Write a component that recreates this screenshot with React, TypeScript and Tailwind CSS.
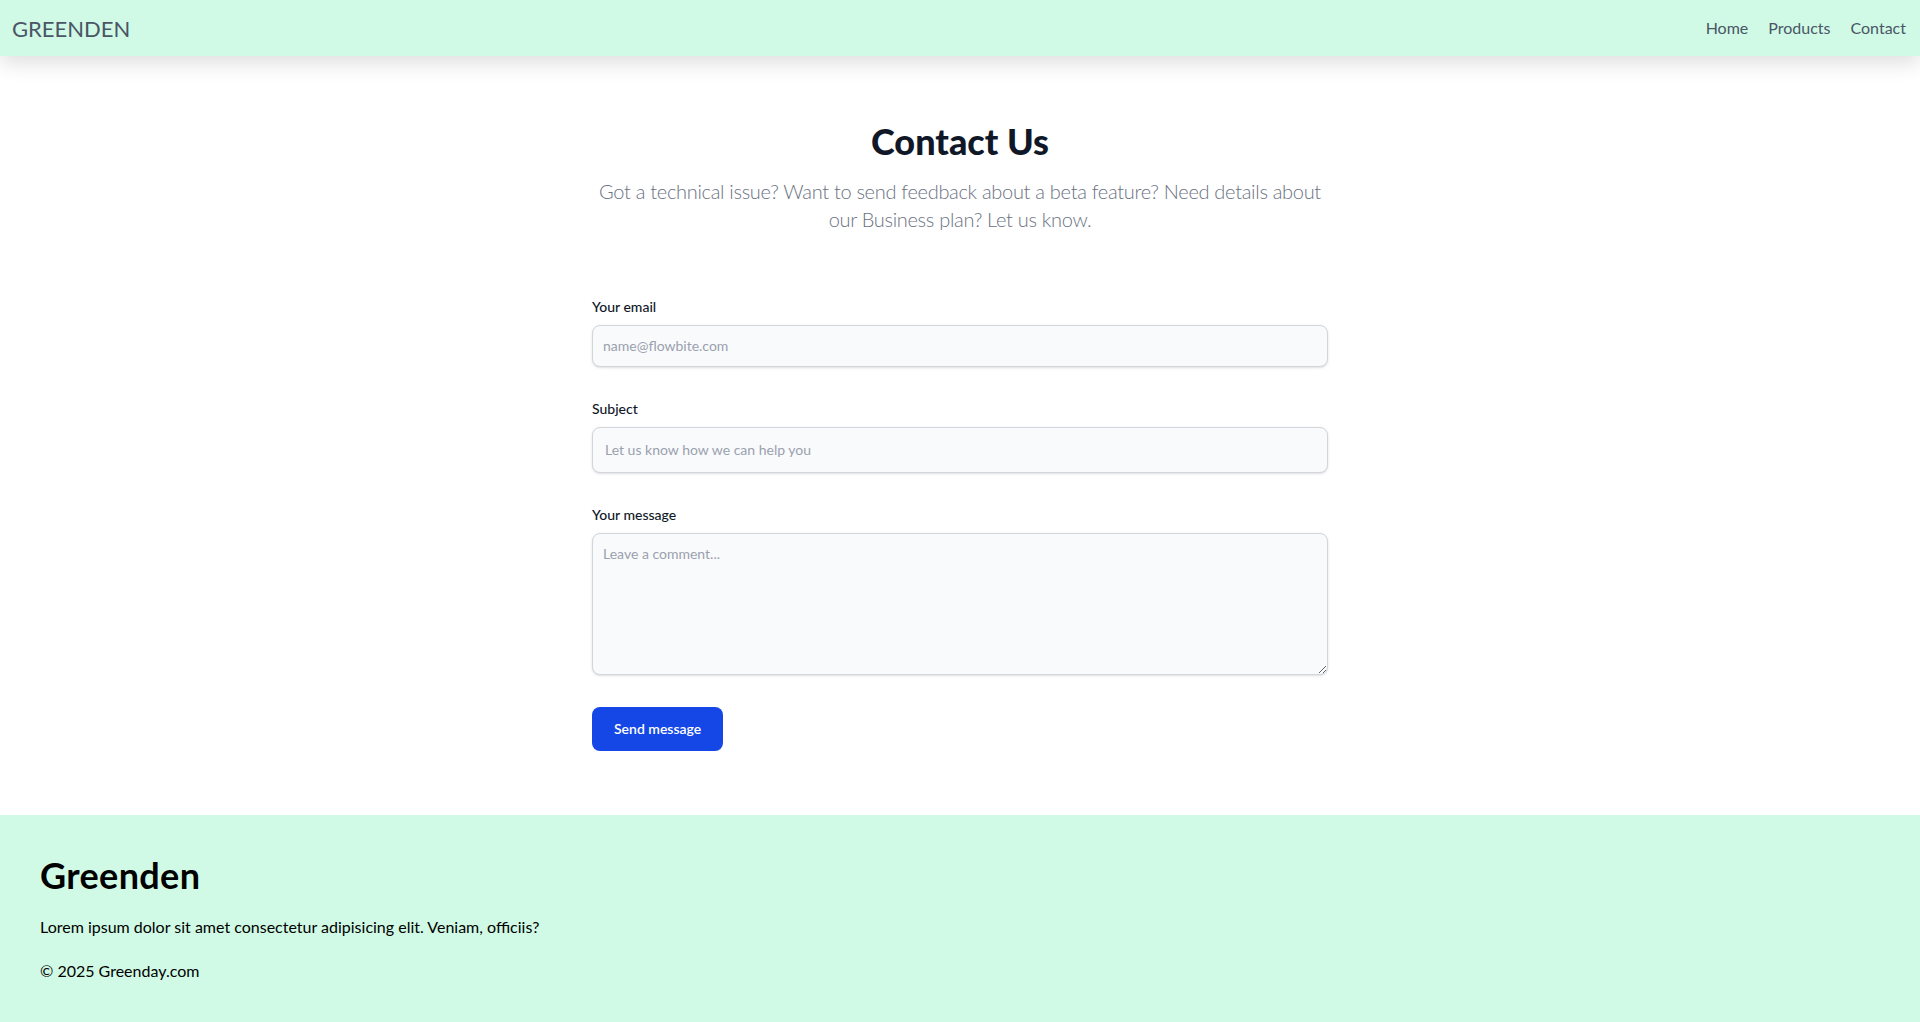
import React from "react";

// Contact page — navbar, Flowbite-style contact form, footer.

function Navbar() {
  return (
    <nav className="relative z-10 flex h-14 items-center justify-between bg-emerald-100 px-3 shadow-[0_8px_20px_rgba(0,0,0,0.12)]">
      <a href="#" className="text-[22px] text-gray-600">GREENDEN</a>
      <ul className="flex items-center gap-5 pr-0.5 text-base text-gray-600">
        <li><a href="#">Home</a></li>
        <li><a href="#">Products</a></li>
        <li><a href="#">Contact</a></li>
      </ul>
    </nav>
  );
}

function ContactSection() {
  return (
    <section className="bg-white">
      <div className="mx-auto max-w-screen-md px-4 py-16">
        <h2 className="mb-4 pt-px text-center text-4xl font-black text-gray-900">Contact Us</h2>
        <p className="mb-16 text-center text-xl font-light tracking-[-0.015em] text-gray-500">
          Got a technical issue? Want to send feedback about a beta feature? Need details about our Business plan? Let us know.
        </p>
        <form className="space-y-8" onSubmit={(e) => e.preventDefault()}>
          <div>
            <label htmlFor="email" className="mb-2 block text-sm font-medium text-gray-900">Your email</label>
            <input
              type="email"
              id="email"
              placeholder="name@flowbite.com"
              className="block w-full rounded-lg border border-gray-300 bg-gray-50 p-2.5 text-sm text-gray-900 shadow-sm placeholder:text-gray-400"
            />
          </div>
          <div>
            <label htmlFor="subject" className="mb-2 block text-sm font-medium text-gray-900">Subject</label>
            <input
              type="text"
              id="subject"
              placeholder="Let us know how we can help you"
              className="block w-full rounded-lg border border-gray-300 bg-gray-50 p-3 text-sm text-gray-900 shadow-sm placeholder:text-gray-400"
            />
          </div>
          <div>
            <label htmlFor="message" className="mb-2 block text-sm font-medium text-gray-900">Your message</label>
            <textarea
              id="message"
              rows={6}
              placeholder="Leave a comment..."
              className="block w-full rounded-lg border border-gray-300 bg-gray-50 p-2.5 text-sm text-gray-900 shadow-sm placeholder:text-gray-400"
            />
          </div>
          <button type="submit" className="rounded-lg bg-blue-700 px-[22px] py-3 text-center text-sm font-semibold text-white">
            Send message
          </button>
        </form>
      </div>
    </section>
  );
}

function Footer() {
  return (
    <footer className="bg-emerald-100 p-10 text-black">
      <h2 className="text-4xl font-bold tracking-[0.01em]">Greenden</h2>
      <p className="mt-5">Lorem ipsum dolor sit amet consectetur adipisicing elit. Veniam, officiis?</p>
      <p className="mt-5">© 2025 Greenday.com</p>
    </footer>
  );
}

export default function App() {
  return (
    <div className="min-h-screen bg-white font-['Lato',sans-serif]">
      <Navbar />
      <ContactSection />
      <Footer />
    </div>
  );
}
